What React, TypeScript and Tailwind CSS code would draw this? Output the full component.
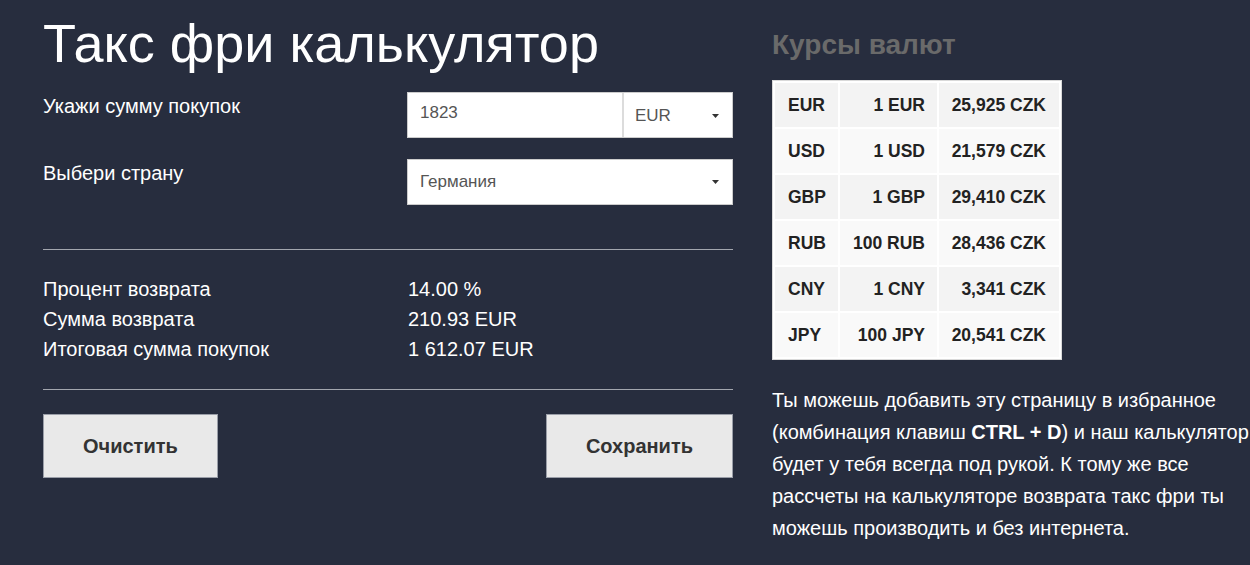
import React from "react";

const rates = [
  ["EUR", "1 EUR", "25,925 CZK"],
  ["USD", "1 USD", "21,579 CZK"],
  ["GBP", "1 GBP", "29,410 CZK"],
  ["RUB", "100 RUB", "28,436 CZK"],
  ["CNY", "1 CNY", "3,341 CZK"],
  ["JPY", "100 JPY", "20,541 CZK"],
];

function Caret() {
  return (
    <svg width="7" height="4" viewBox="0 0 7 4" className="shrink-0">
      <polygon points="0,0 7,0 3.5,4" fill="#333" />
    </svg>
  );
}

export default function App() {
  return (
    <div
      className="w-[1250px] h-[565px] overflow-hidden bg-[#272d3e] flex pl-[43px]"
      style={{ fontFamily: '"Liberation Sans", Arial, sans-serif' }}
    >
      <div className="w-[690px] shrink-0 pt-[11px]">
        <h1 className="text-[54px] leading-[64px] text-white">Такс фри калькулятор</h1>

        <div className="mt-[17px] grid grid-cols-[364px_326px]">
          <div className="text-[20px] leading-[28px] text-white">Укажи сумму покупок</div>
          <div className="flex h-[46px] border border-[#cccccc] bg-white text-[17px] text-[#555]">
            <div className="w-[216px] px-3 flex items-center pb-[5px] border-r-2 border-[#dcdcdc]">1823</div>
            <div className="flex-1 flex items-center justify-between pl-[11px] pr-[13px] pt-[2px]">
              <span>EUR</span>
              <Caret />
            </div>
          </div>
        </div>

        <div className="mt-[21px] grid grid-cols-[364px_326px]">
          <div className="text-[20px] leading-[28px] text-white">Выбери страну</div>
          <div className="flex h-[46px] border border-[#cccccc] bg-white text-[17px] text-[#555] items-center justify-between pl-3 pr-[13px]">
            <span>Германия</span>
            <Caret />
          </div>
        </div>

        <div className="mt-[44px] border-t border-[#a3a6ae]" />

        <div className="mt-[24px] text-[20px] leading-[30px] text-white">
          <div className="grid grid-cols-[365px_1fr]">
            <div>Процент возврата</div>
            <div>14.00 %</div>
          </div>
          <div className="grid grid-cols-[365px_1fr]">
            <div>Сумма возврата</div>
            <div>210.93 EUR</div>
          </div>
          <div className="grid grid-cols-[365px_1fr]">
            <div>Итоговая сумма покупок</div>
            <div>1 612.07 EUR</div>
          </div>
        </div>

        <div className="mt-[25px] border-t border-[#a3a6ae]" />

        <div className="mt-[24px] flex justify-between">
          <button className="h-[64px] px-[39px] bg-[#e9e9e9] border border-[#9a9ea8] text-[20px] font-bold text-[#333]">
            Очистить
          </button>
          <button className="h-[64px] px-[39px] bg-[#e9e9e9] border border-[#9a9ea8] text-[20px] font-bold text-[#333]">
            Сохранить
          </button>
        </div>
      </div>

      <div className="ml-[39px] pt-[29px] shrink-0">
        <h2 className="text-[28px] leading-[31px] font-bold text-[#6a6a6a]">Курсы валют</h2>

        <div className="mt-[20px] w-[290px] bg-white border border-[#d9d9d9] p-[2px] grid grid-cols-[63px_97px_120px] gap-[2px] text-[17.5px] font-bold text-[#222]">
          {rates.map((r, i) => {
            const bg = i % 2 === 0 ? "bg-[#f3f3f3]" : "bg-[#f9f9f9]";
            return (
              <React.Fragment key={r[0]}>
                <div className={`h-[44px] flex items-center pl-[13px] ${bg}`}>{r[0]}</div>
                <div className={`h-[44px] flex items-center justify-end pr-3 ${bg}`}>{r[1]}</div>
                <div className={`h-[44px] flex items-center justify-end pr-[13px] ${bg}`}>{r[2]}</div>
              </React.Fragment>
            );
          })}
        </div>

        <p className="mt-[24px] w-[490px] text-[20px] leading-[32px] text-white">
          Ты можешь добавить эту страницу в избранное (комбинация клавиш <b>CTRL + D</b>) и наш калькулятор
          будет у тебя всегда под рукой. К тому же все рассчеты на калькуляторе возврата такс фри ты можешь
          производить и без интернета.
        </p>
      </div>
    </div>
  );
}
